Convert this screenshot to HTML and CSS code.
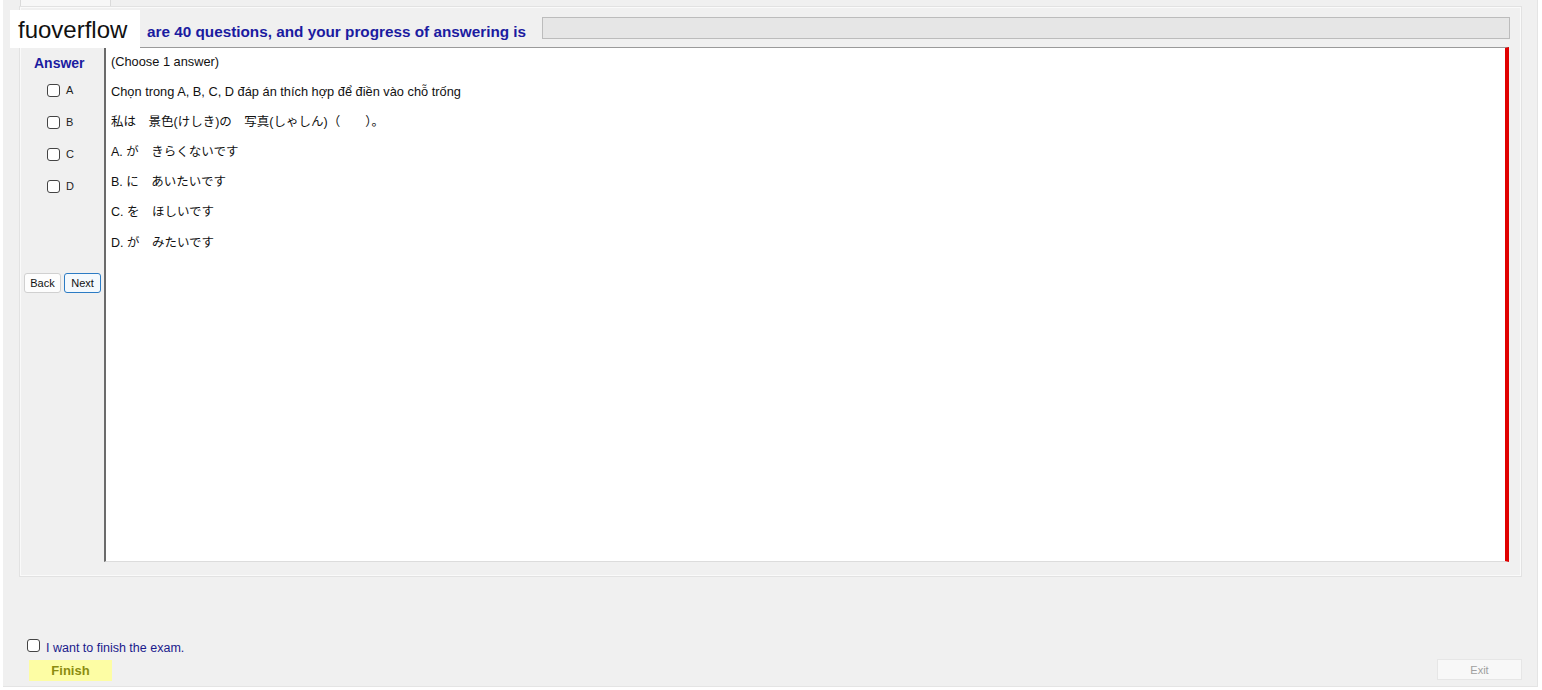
FILE: index.html
```html
<!DOCTYPE html>
<html lang="en">
<head>
  <meta charset="UTF-8" />
  <title>Exam</title>
  <link rel="stylesheet" href="styles.css">
</head>
<body>
  <div class="window">
    <div class="tab"></div>

    <div class="group">
      <div class="header">
        <span class="progress-text">are 40 questions, and your progress of answering is</span>
        <div class="progress-bar"></div>
      </div>

      <div class="main">
        <div class="side">
          <div class="answer-title">Answer</div>
          <label class="option"><input type="checkbox" class="chk" /> A</label>
          <label class="option"><input type="checkbox" class="chk" /> B</label>
          <label class="option"><input type="checkbox" class="chk" /> C</label>
          <label class="option"><input type="checkbox" class="chk" /> D</label>
          <div class="nav">
            <button class="btn-small">Back</button>
            <button class="btn-small btn-next">Next</button>
          </div>
        </div>

        <div class="content">
          <p>(Choose 1 answer)</p>
          <p>Chọn trong A, B, C, D đáp án thích hợp để điền vào chỗ trống</p>
          <p class="jp">私は　景色(けしき)の　写真(しゃしん)（　　）。</p>
          <p class="jp">A. が　きらくないです</p>
          <p class="jp">B. に　あいたいです</p>
          <p class="jp">C. を　ほしいです</p>
          <p class="jp">D. が　みたいです</p>
        </div>
      </div>
    </div>

    <div class="footer">
      <label class="finish-check"><input type="checkbox" class="chk" /> <span>I want to finish the exam.</span></label>
      <div class="footer-buttons">
        <button class="btn-finish">Finish</button>
        <button class="btn-exit">Exit</button>
      </div>
    </div>
  </div>

  <div class="watermark">fuoverflow</div>
</body>
</html>
```

FILE: styles.css
```css
/* base */
* { box-sizing:border-box; }
body {
  margin:0; background:#fff;
  font-family:'Liberation Sans', Arial, 'Noto Sans CJK JP', sans-serif;
  width:1542px; height:690px; overflow:hidden; position:relative;
}

.window {
  margin-left:3px; width:1535px; height:687px;
  background:#f0f0f0; border-right:1px solid #e4e4e4; border-bottom:1px solid #e4e4e4;
  display:flex; flex-direction:column;
}
.tab {
  margin-left:17px; width:91px; height:6px;
  background:#f7f7f7; border:1px solid #dadada; border-top:none; border-bottom:none;
}

.group {
  margin-left:16px; width:1503px; height:571px;
  border:1px solid #e2e2e2; box-shadow:inset 0 0 0 1px #fafafa;
  display:flex; flex-direction:column;
}
.header { height:40px; display:flex; align-items:flex-start; }
.progress-text {
  margin:17px 0 0 127px; font-size:15.3px; line-height:16px; font-weight:700;
  color:#1b1ba0; white-space:nowrap;
}
.progress-bar {
  flex:1; height:22px; margin:10px 11px 0 16px;
  background:#e6e6e6; border:1px solid #bcbcbc;
}

.main { height:515px; display:flex; }
.side { width:84px; display:flex; flex-direction:column; }
.answer-title {
  margin:8px 0 0 14px; font-size:14px; line-height:16px; font-weight:700; color:#1b1ba0;
}
.option {
  height:32px; display:flex; align-items:center; gap:6px;
  padding-left:27px; font-size:11px; color:#222;
}
.option:first-of-type { margin-top:3px; }
.chk {
  appearance:none; -webkit-appearance:none; margin:0;
  width:13px; height:13px; border:1px solid #444; border-radius:3px; background:#fff;
}
.nav { margin:71px 0 0 4px; display:flex; gap:3px; }
.btn-small {
  width:37px; height:20px; padding:0; font-family:inherit; font-size:11px; color:#111;
  background:#fdfdfd; border:1px solid #d0d0d0; border-radius:3px;
}
.btn-next { border-color:#2b7bc4; background:#f4f9fd; }

.content {
  flex:1; margin-right:12px; background:#fff;
  border-left:2px solid #6b6b6b; border-top:1px solid #9a9a9a;
  border-right:4px solid #e00000; border-bottom:1px solid #dcdcdc;
  padding:6px 0 0 5px;
}
.content p { margin:0 0 15.3px; font-size:12.8px; line-height:15px; color:#111; }
.content p.jp { font-family:'Liberation Sans', 'Noto Sans CJK JP', sans-serif; font-size:12.5px; }

.footer { margin-top:auto; padding-bottom:5px; }
.finish-check {
  display:flex; align-items:center; gap:6px; margin-left:24px; height:14px;
  font-size:12.5px; color:#1a1a8c;
}
.finish-check span { padding-top:6px; }
.footer-buttons { display:flex; justify-content:space-between; align-items:flex-start; margin-top:7px; }
.btn-finish {
  margin:1px 0 0 26px; width:83px; height:21px; padding:0;
  background:#fdfda4; border:none; font-family:inherit; font-size:13px; font-weight:700; color:#8c8c10;
}
.btn-exit {
  margin-right:15px; width:85px; height:21px; padding:0;
  background:#f8f8f8; border:1px solid #e6e6e6; font-family:inherit; font-size:11px; color:#a0a0a0;
}

.watermark {
  position:absolute; left:10px; top:10px; width:130px; height:38px;
  background:#fff; padding-left:8px;
  font-size:24px; line-height:40px; color:#111;
}
```
